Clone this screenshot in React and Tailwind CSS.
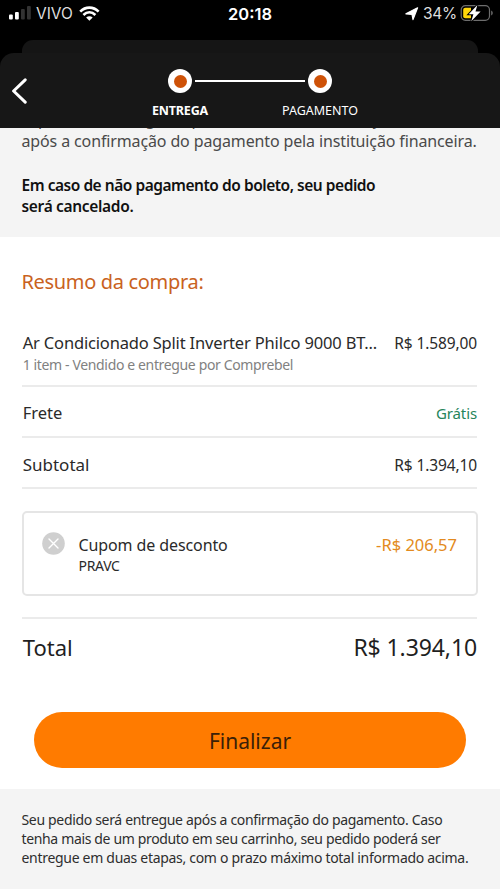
function StatusBar() {
  return (
    <div className="relative flex h-10 items-start justify-between bg-black font-['Inter',sans-serif] text-white">
      <div className="flex pl-2">
        <svg className="mt-1.5 h-[15px] w-[23px]" viewBox="0 0 23 15">
          <rect x="1" y="8.5" width="3.8" height="5" rx="1" fill="#fff" />
          <rect x="7" y="6" width="3.8" height="7.5" rx="1" fill="#fff" />
          <rect x="13" y="3" width="3.8" height="10.5" rx="1" fill="#333" />
          <rect x="19" y="0" width="3.8" height="13.5" rx="1" fill="#333" />
        </svg>
        <span className="ml-[5px] mt-1 text-[15.5px] leading-5 text-[#dedede]">VIVO</span>
        <svg className="ml-[6px] mt-1.5 h-[15px] w-[21px]" viewBox="0 0 21 15">
          <g fill="none" stroke="#fff" strokeWidth="2.7">
            <path d="M1.2 5.6C6.5.3 14.3.3 19.6 5.6" />
            <path d="M4.4 9C8 5.6 12.8 5.6 16.4 9" />
          </g>
          <path d="M10.4 14.8 7.1 11.5Q10.4 8.8 13.7 11.5Z" fill="#fff" />
        </svg>
      </div>
      <span className="absolute left-[228px] top-1 text-[16.5px] font-semibold leading-5">20:18</span>
      <div className="flex pr-[7px]">
        <svg className="mt-[7px] h-[14px] w-[14px]" viewBox="0 0 14 14">
          <path d="M12.6.8 8 12.6 7 7.4.9 6.8Z" fill="#fff" stroke="#fff" strokeWidth="1.2" strokeLinejoin="round" />
        </svg>
        <span className="ml-[4px] mt-1 text-[15.5px] leading-5 tracking-[-0.3px] text-[#dedede]">34%</span>
        <svg className="ml-[3px] mt-1 h-[18px] w-[33px]" viewBox="0 0 33 18">
          <rect x="1.2" y="1.7" width="28.3" height="14.6" rx="4.2" fill="none" stroke="#6d6d6d" strokeWidth="1.2" />
          <path d="M31.2 6.5Q32.8 7.2 32.8 9T31.2 11.6Z" fill="#6d6d6d" />
          <path d="M5.3 3.7H11V14.3H5.3Q3.2 14.3 3.2 12.2V5.8Q3.2 3.7 5.3 3.7Z" fill="#ffd60a" />
          <path d="M17.4 1 8.7 10.2H13.4L11.3 17.2 20.6 7.6H15.5Z" fill="#fff" stroke="#000" strokeWidth="2" paintOrder="stroke" />
        </svg>
      </div>
    </div>
  );
}

function StepDot() {
  return (
    <div className="flex size-6 shrink-0 items-center justify-center rounded-full bg-white">
      <div className="size-[13px] rounded-full bg-[#ce5208]" />
    </div>
  );
}

function Header() {
  return (
    <header className="bg-black">
      <StatusBar />
      <div className="mx-[22px] h-[13px] rounded-t-[11px] bg-[#151515]" />
      <div className="flex h-[75px] rounded-t-[14px] bg-[#171717] text-white">
        <svg className="ml-[11px] mt-[25px] h-[26px] w-4" viewBox="0 0 16 26">
          <path d="M14.2 1.8 2.6 13 14.2 24.2" fill="none" stroke="#fff" strokeWidth="3" strokeLinecap="round" strokeLinejoin="round" />
        </svg>
        <div className="ml-[113px] mt-4 w-[230px]">
          <div className="flex w-[220px] items-center gap-[3px] pl-7">
            <StepDot />
            <div className="h-[2.5px] w-[110px] bg-white" />
            <StepDot />
          </div>
          <div className="mt-[9px] flex text-[12.5px] leading-[18px]">
            <span className="w-20 text-center font-bold tracking-[-0.15px]">ENTREGA</span>
            <span className="ml-[50px] w-[100px] text-center">PAGAMENTO</span>
          </div>
        </div>
      </div>
    </header>
  );
}

function Notice() {
  return (
    <section className="h-[109px] overflow-hidden bg-[#f4f4f4] pl-[21.5px]">
      <div className="-mt-[19px] whitespace-nowrap text-[16px] leading-[20.5px] tracking-[-0.13px] text-[#4a4a4a]">
        <p>O prazo de entrega do pedido informado começará</p>
        <p className="mt-px">após a confirmação do pagamento pela instituição financeira.</p>
      </div>
      <p className="mt-6 text-[15.5px] font-semibold leading-[20.5px] tracking-[-0.47px] text-[#111]">
        Em caso de não pagamento do boleto, seu pedido
        <br />
        <span className="tracking-[-0.33px]">será cancelado.</span>
      </p>
    </section>
  );
}

function Summary() {
  return (
    <section className="h-[552px] bg-white pl-[22px] pr-[23px] pt-8 text-[#2a2a2a]">
      <h2 className="-ml-[0.5px] text-[20px] leading-[26px] tracking-[-0.33px] text-[#c9621e]">Resumo da compra:</h2>
      <div className="mt-[37px] h-[55px] border-b-2 border-[#ebebeb] pl-[0.7px]">
        <div className="flex justify-between whitespace-nowrap leading-[22px]">
          <span className="text-[16.5px] tracking-[-0.17px]">Ar Condicionado Split Inverter Philco 9000 BT...</span>
          <span className="text-[15.5px] tracking-[-0.12px]">R$ 1.589,00</span>
        </div>
        <p className="text-[14px] leading-[21px] tracking-[-0.36px] text-[#818181]">1 item - Vendido e entregue por Comprebel</p>
      </div>
      <div className="flex h-[51px] items-center justify-between border-b-2 border-[#ebebeb] pl-[0.7px] pt-[3px]">
        <span className="text-[16.5px]">Frete</span>
        <span className="text-[15px] tracking-[-0.1px] text-[#26855b]">Grátis</span>
      </div>
      <div className="flex h-[51px] items-center justify-between border-b-2 border-[#ebebeb] pl-[0.7px] pt-[5px]">
        <span className="text-[17px]">Subtotal</span>
        <span className="pt-px text-[15.5px] tracking-[-0.12px]">R$ 1.394,10</span>
      </div>
      <div className="-mr-px mt-[22px] flex h-[85px] rounded-[5px] border-[2.5px] border-[#e5e5e5] pl-[18px] pr-[19px] pt-[19px]">
        <svg className="size-[23px] shrink-0" viewBox="0 0 23 23">
          <circle cx="11.5" cy="11.5" r="11.3" fill="#cfcfcf" />
          <path d="M7 7 16 16M16 7 7 16" stroke="#fff" strokeWidth="1.4" strokeLinecap="round" />
        </svg>
        <div className="ml-[13.5px] mt-[2px]">
          <p className="text-[16px] leading-[22px] tracking-[-0.1px]">Cupom de desconto</p>
          <p className="text-[14px] leading-[19px] tracking-[-0.3px]">PRAVC</p>
        </div>
        <span className="ml-auto mt-[2px] text-[16.5px] leading-[22px] text-[#e38a20]">-R$ 206,57</span>
      </div>
      <div className="mt-[21px] flex items-center justify-between border-t-2 border-[#ebebeb] pl-[0.7px] pt-[12px] leading-8 text-[#1f1f1f]">
        <span className="text-[22px]">Total</span>
        <span className="text-[23px] tracking-[-0.1px]">R$ 1.394,10</span>
      </div>
      <button className="ml-3 mt-[49px] block h-14 w-[432px] rounded-full bg-[#ff7b00] pt-[4px] text-[21px] text-[#3a2008]">Finalizar</button>
    </section>
  );
}

export default function App() {
  return (
    <main className="h-[889px] w-[500px] overflow-hidden bg-white font-['Noto_Sans',sans-serif]">
      <Header />
      <Notice />
      <Summary />
      <footer className="h-[100px] whitespace-nowrap bg-[#f4f4f4] pl-[21.5px] pt-[21px] text-[14px] leading-[19px] text-[#2e2e2e]">
        <p className="tracking-[-0.33px]">Seu pedido será entregue após a confirmação do pagamento. Caso</p>
        <p className="tracking-[-0.35px]">tenha mais de um produto em seu carrinho, seu pedido poderá ser</p>
        <p className="tracking-[-0.3px]">entregue em duas etapas, com o prazo máximo total informado acima.</p>
      </footer>
    </main>
  );
}
